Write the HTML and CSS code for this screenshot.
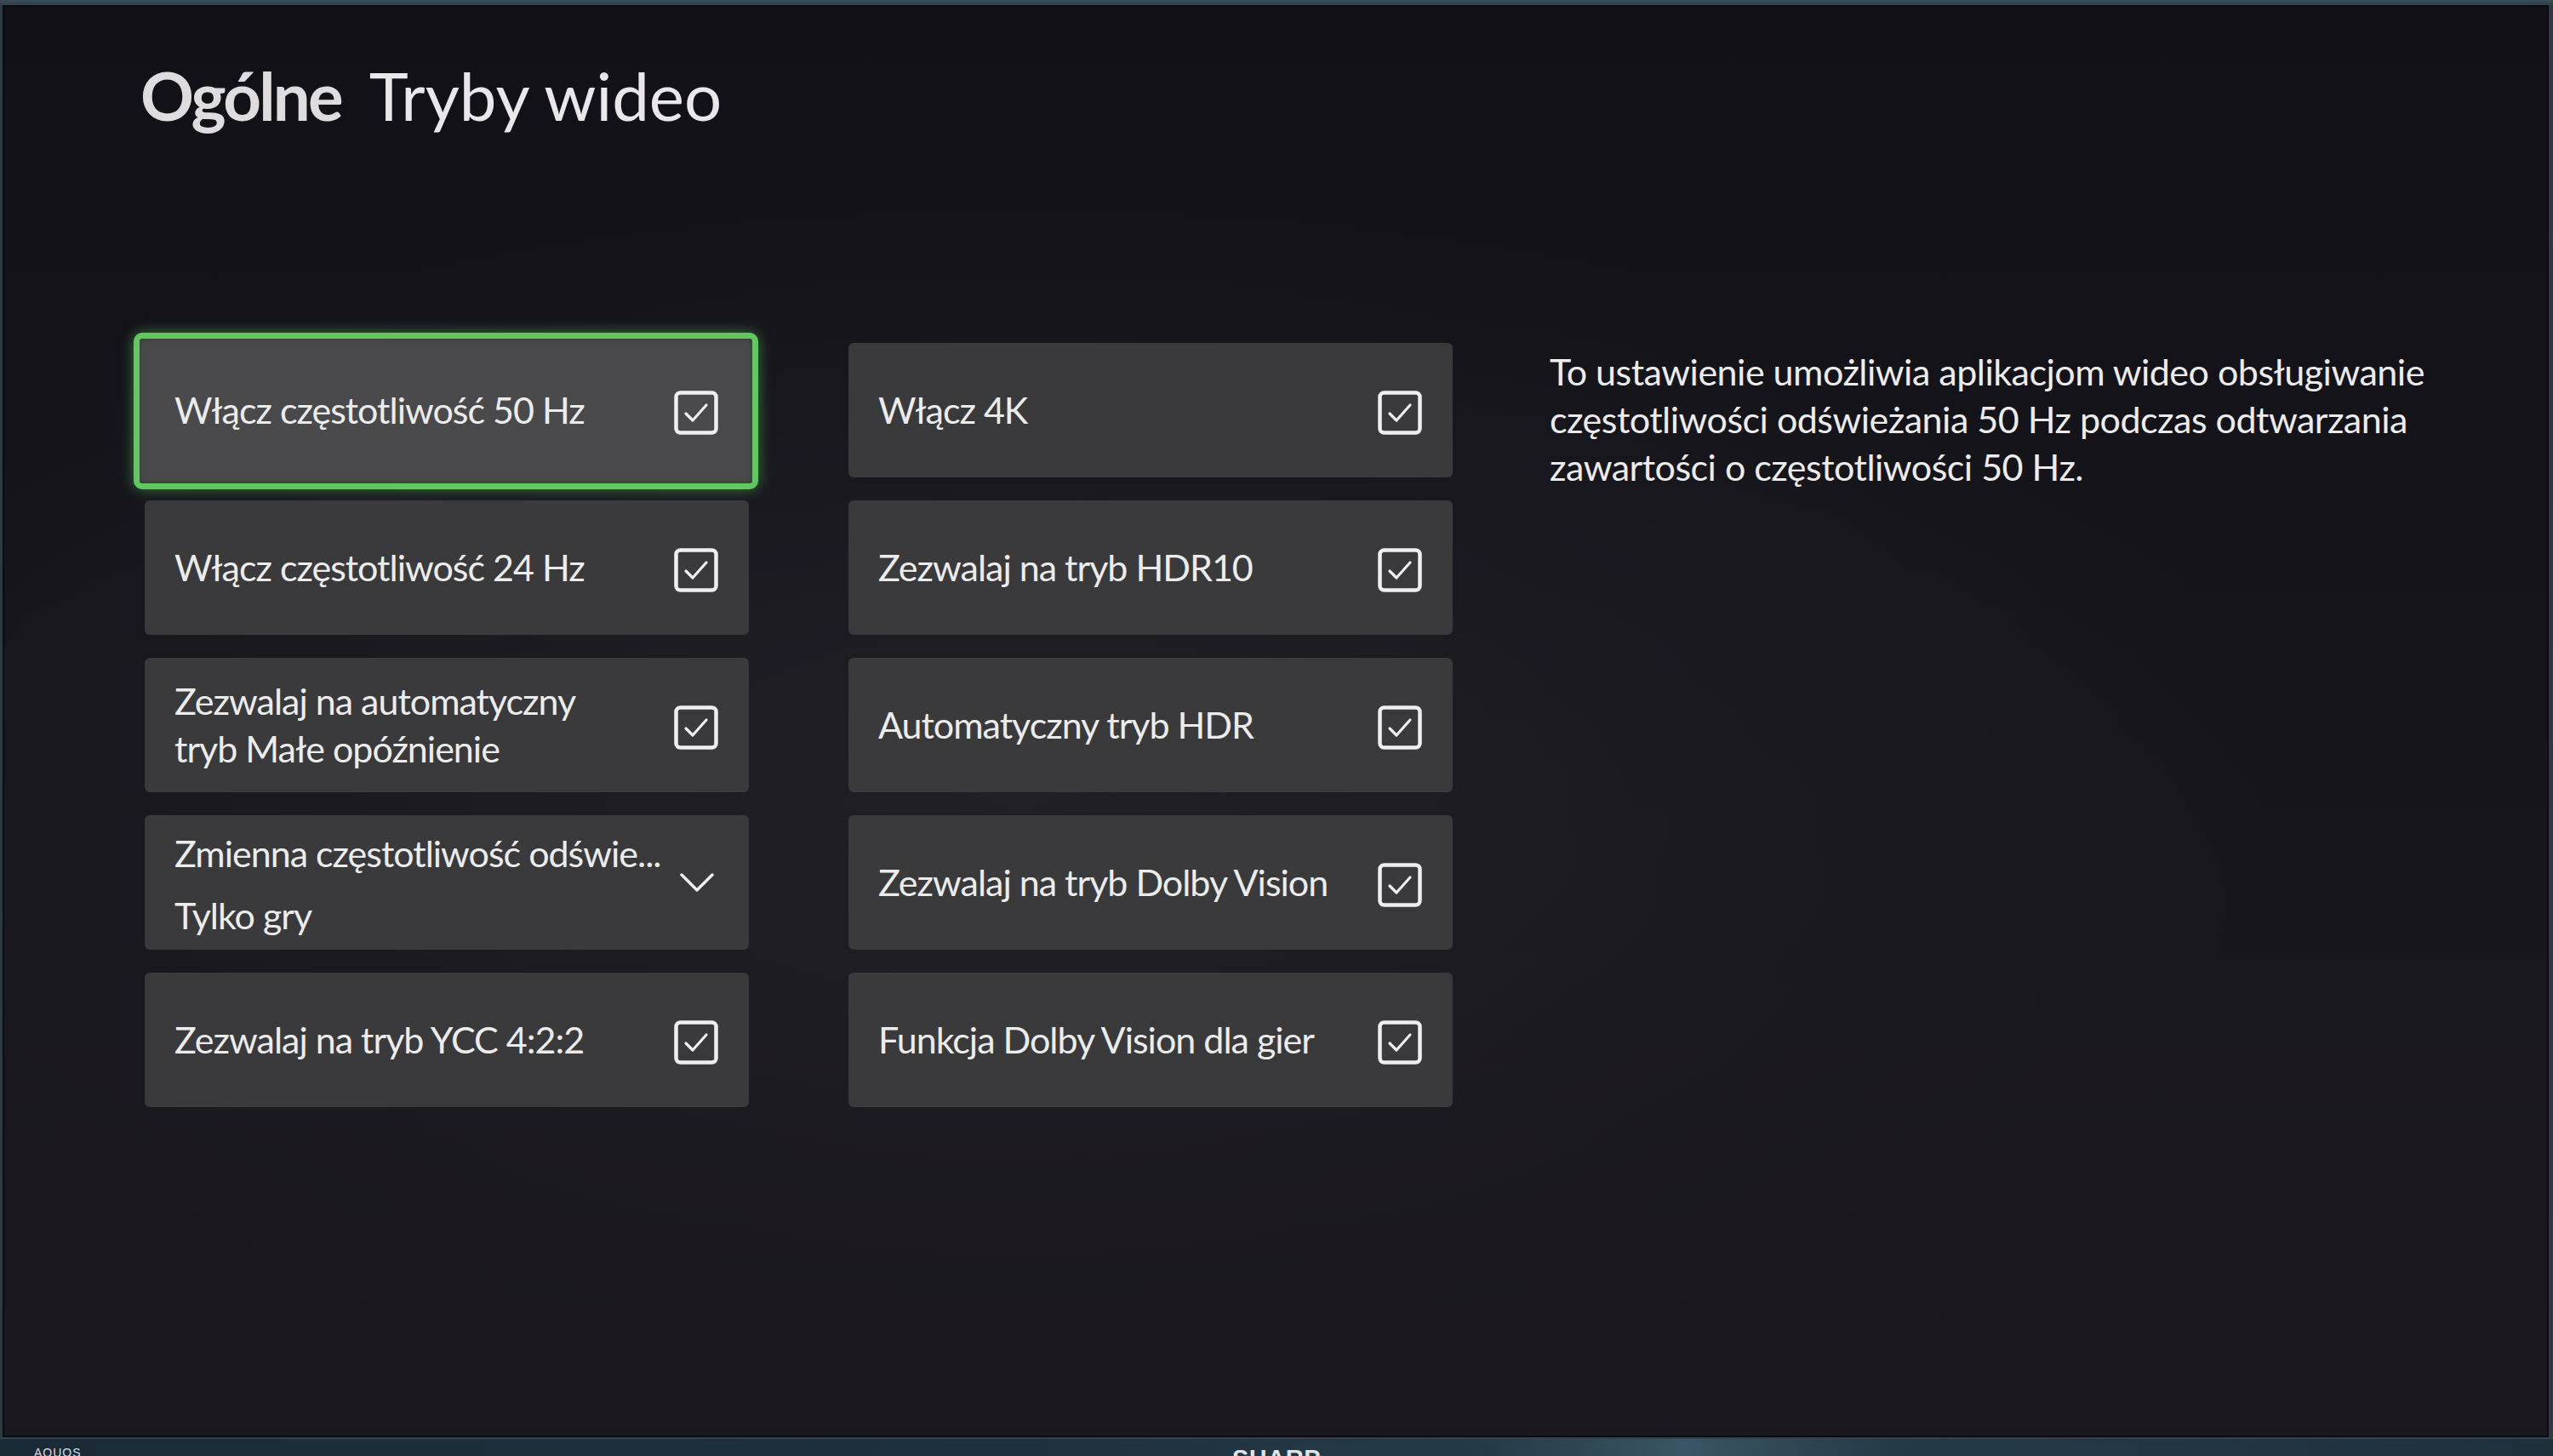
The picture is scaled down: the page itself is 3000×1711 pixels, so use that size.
FILE: index.html
```html
<!DOCTYPE html>
<html lang="pl">
<head>
<meta charset="utf-8">
<title>Tryby wideo</title>
<link rel="stylesheet" href="styles.css">
</head>
<body>
<div class="tv">
  <div class="screen">
    <h1 class="title"><span class="title-main">Ogólne</span><span class="title-sub">Tryby wideo</span></h1>
    <div class="content">
      <div class="grid">
        <div class="tile focused">
          <span class="label">Włącz częstotliwość 50 Hz</span>
          <svg class="check" viewBox="0 0 52 52"><rect x="2.5" y="2.5" width="47" height="47" rx="5"/><polyline points="14,27 22,35 38,17"/></svg>
        </div>
        <div class="tile">
          <span class="label">Włącz częstotliwość 24 Hz</span>
          <svg class="check" viewBox="0 0 52 52"><rect x="2.5" y="2.5" width="47" height="47" rx="5"/><polyline points="14,27 22,35 38,17"/></svg>
        </div>
        <div class="tile">
          <span class="label">Zezwalaj na automatyczny<br>tryb Małe opóźnienie</span>
          <svg class="check" viewBox="0 0 52 52"><rect x="2.5" y="2.5" width="47" height="47" rx="5"/><polyline points="14,27 22,35 38,17"/></svg>
        </div>
        <div class="tile dropdown">
          <div class="dd-text">
            <span class="label">Zmienna częstotliwość odświe...</span>
            <span class="label">Tylko gry</span>
          </div>
          <svg class="chevron" viewBox="0 0 40 24"><polyline points="2,3 20,21 38,3"/></svg>
        </div>
        <div class="tile">
          <span class="label">Zezwalaj na tryb YCC 4:2:2</span>
          <svg class="check" viewBox="0 0 52 52"><rect x="2.5" y="2.5" width="47" height="47" rx="5"/><polyline points="14,27 22,35 38,17"/></svg>
        </div>
        <div class="tile">
          <span class="label">Włącz 4K</span>
          <svg class="check" viewBox="0 0 52 52"><rect x="2.5" y="2.5" width="47" height="47" rx="5"/><polyline points="14,27 22,35 38,17"/></svg>
        </div>
        <div class="tile">
          <span class="label">Zezwalaj na tryb HDR10</span>
          <svg class="check" viewBox="0 0 52 52"><rect x="2.5" y="2.5" width="47" height="47" rx="5"/><polyline points="14,27 22,35 38,17"/></svg>
        </div>
        <div class="tile">
          <span class="label">Automatyczny tryb HDR</span>
          <svg class="check" viewBox="0 0 52 52"><rect x="2.5" y="2.5" width="47" height="47" rx="5"/><polyline points="14,27 22,35 38,17"/></svg>
        </div>
        <div class="tile">
          <span class="label">Zezwalaj na tryb Dolby Vision</span>
          <svg class="check" viewBox="0 0 52 52"><rect x="2.5" y="2.5" width="47" height="47" rx="5"/><polyline points="14,27 22,35 38,17"/></svg>
        </div>
        <div class="tile">
          <span class="label">Funkcja Dolby Vision dla gier</span>
          <svg class="check" viewBox="0 0 52 52"><rect x="2.5" y="2.5" width="47" height="47" rx="5"/><polyline points="14,27 22,35 38,17"/></svg>
        </div>
      </div>
      <p class="desc">To ustawienie umożliwia aplikacjom wideo obsługiwanie<br>częstotliwości odświeżania 50 Hz podczas odtwarzania<br>zawartości o częstotliwości 50 Hz.</p>
    </div>
  </div>
  <div class="bezel">
    <span class="aquos">AQUOS</span>
    <span class="sharp">SHARP</span>
  </div>
</div>
</body>
</html>
```

FILE: styles.css
```css
html, body {
  margin: 0;
  padding: 0;
}

body {
  width: 3000px;
  height: 1711px;
  overflow: hidden;
  background: #2c3c47;
  font-family: Lato, "Open Sans", "Noto Sans", sans-serif;
  color: #ececec;
}

.tv {
  width: 3000px;
  height: 1711px;
  display: flex;
  flex-direction: column;
  background: linear-gradient(180deg, #3d4e59 0, #2b3a44 8px);
}

.screen {
  margin: 6px 5px 0 3px;
  height: 1683px;
  box-sizing: border-box;
  border: 2px solid #0c0c10;
  background:
    radial-gradient(ellipse 70% 60% at 40% 55%, rgba(42, 40, 48, 0.55), rgba(0, 0, 0, 0) 70%),
    linear-gradient(180deg, #121118 0%, #17161c 60%, #1a181e 100%);
}

.title {
  margin: 64px 0 0 160px;
  font-size: 78px;
  line-height: 80px;
  font-weight: 400;
  display: flex;
  gap: 33px;
  color: #e9e7ea;
}

.title-main {
  font-weight: 700;
  letter-spacing: -2.8px;
  color: #dedcdf;
}

.content {
  display: flex;
  margin: 251px 0 0 165px;
}

.grid {
  display: grid;
  grid-template-columns: 710px 710px;
  grid-template-rows: repeat(5, 158px);
  grid-auto-flow: column;
  column-gap: 117px;
  row-gap: 27px;
}

.tile {
  position: relative;
  display: flex;
  align-items: center;
  justify-content: space-between;
  gap: 16px;
  padding: 0 36px 0 35px;
  border-radius: 6px;
  background: #3a3a3c;
}

.tile.focused {
  background: transparent;
}

.tile.focused::before {
  content: "";
  position: absolute;
  left: -13px;
  right: -11px;
  top: -12px;
  bottom: -14px;
  border: 7px solid #62c760;
  border-radius: 10px;
  background: #4a4a4c;
  box-shadow: 0 0 16px rgba(90, 200, 90, 0.55), inset 0 0 6px rgba(20, 60, 20, 0.6);
  z-index: 0;
}

.tile > * {
  position: relative;
  z-index: 1;
}

.label {
  font-size: 43px;
  line-height: 56px;
  letter-spacing: -1px;
  color: #ececec;
  white-space: nowrap;
}

.check {
  width: 52px;
  height: 52px;
  flex: none;
  margin-top: 6px;
}

.check rect {
  fill: none;
  stroke: #efefef;
  stroke-width: 4.5;
}

.check polyline {
  fill: none;
  stroke: #efefef;
  stroke-width: 3.2;
  stroke-linecap: round;
  stroke-linejoin: round;
}

.dropdown {
  align-items: flex-start;
  padding-right: 41px;
}

.dd-text {
  display: flex;
  flex-direction: column;
  gap: 17px;
  padding-top: 17px;
  min-width: 0;
}

.chevron {
  width: 40px;
  height: 24px;
  flex: none;
  margin-top: 67px;
}

.chevron polyline {
  fill: none;
  stroke: #efefef;
  stroke-width: 3.4;
  stroke-linecap: round;
  stroke-linejoin: round;
}

.desc {
  margin: 6px 0 0 114px;
  font-size: 43px;
  line-height: 56px;
  letter-spacing: -0.5px;
  color: #ececec;
}

.bezel {
  flex: 1;
  position: relative;
  overflow: hidden;
  display: flex;
  justify-content: center;
  background: linear-gradient(90deg, #1b2b36 0%, #1e303c 40%, #243a47 58%, #3a5563 66%, #243a47 74%, #1f303b 100%);
  border-top: 2px solid #2e4452;
}

.aquos {
  position: absolute;
  left: 40px;
  top: 9px;
  font-family: "Liberation Sans Narrow", "Liberation Sans", sans-serif;
  font-size: 14px;
  line-height: 14px;
  letter-spacing: 1px;
  color: #d7dde1;
}

.sharp {
  margin-top: 9px;
  font-family: "Liberation Sans", Arial, sans-serif;
  font-weight: 700;
  font-size: 29px;
  line-height: 29px;
  letter-spacing: 0.5px;
  color: #e0e4e6;
}
```
